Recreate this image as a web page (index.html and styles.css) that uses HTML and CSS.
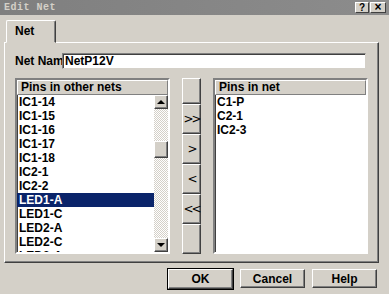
FILE: index.html
```html
<!DOCTYPE html>
<html lang="en">
<head>
    <meta charset="UTF-8">
    <meta name="viewport" content="width=device-width, initial-scale=1.0">
    <title>Edit Net</title>
    <link rel="stylesheet" href="styles.css">
</head>
<body>

    <div class="window">
        <div class="titlebar">
            <span class="title">Edit Net</span>
            <div class="caption-btns">
                <span class="cap-btn">?</span>
                <span class="cap-btn close">×</span>
            </div>
        </div>

        <div class="dialog">
            <div class="tabs">
                <div class="tab">Net</div>
            </div>

            <div class="panel">
                <div class="name-row">
                    <label class="name-label" for="net-name">Net Name</label>
                    <input type="text" id="net-name" class="field" value="NetP12V">
                </div>

                <div class="lists">
                    <div class="listbox">
                        <div class="list-head">Pins in other nets</div>
                        <div class="list-body">
                            <ul class="items">
                                <li>IC1-14</li>
                                <li>IC1-15</li>
                                <li>IC1-16</li>
                                <li>IC1-17</li>
                                <li>IC1-18</li>
                                <li>IC2-1</li>
                                <li>IC2-2</li>
                                <li class="selected">LED1-A</li>
                                <li>LED1-C</li>
                                <li>LED2-A</li>
                                <li>LED2-C</li>
                                <li>LED3-A</li>
                            </ul>
                            <div class="scrollbar">
                                <div class="sb-btn"><span class="arrow up"></span></div>
                                <div class="sb-gap"></div>
                                <div class="sb-thumb"></div>
                                <div class="sb-rest"></div>
                                <div class="sb-btn"><span class="arrow down"></span></div>
                            </div>
                        </div>
                    </div>

                    <div class="movers">
                        <button class="mover first"></button>
                        <button class="mover">&gt;&gt;</button>
                        <button class="mover">&gt;</button>
                        <button class="mover">&lt;</button>
                        <button class="mover">&lt;&lt;</button>
                        <button class="mover"></button>
                    </div>

                    <div class="listbox">
                        <div class="list-head">Pins in net</div>
                        <div class="list-body">
                            <ul class="items">
                                <li>C1-P</li>
                                <li>C2-1</li>
                                <li>IC2-3</li>
                            </ul>
                        </div>
                    </div>
                </div>
            </div>

            <div class="actions">
                <button class="btn default">OK</button>
                <button class="btn">Cancel</button>
                <button class="btn">Help</button>
            </div>
        </div>
    </div>

</body>
</html>
```

FILE: styles.css
```css
body {
    margin: 0;
    font-family: "Liberation Sans", Arial, sans-serif;
    font-size: 12px;
    font-weight: bold;
    color: #000;
    background-color: #d4d0c8;
}
.window {
    width: 389px;
    height: 294px;
    background-color: #d4d0c8;
    overflow: hidden;
}
.titlebar {
    height: 15px;
    display: flex;
    align-items: center;
    justify-content: space-between;
    padding: 0 3px 0 4px;
    background: linear-gradient(to right, #7f7f7f, #8c8c8c);
}
.title {
    font-family: "Liberation Mono", monospace;
    font-size: 10px;
    font-weight: bold;
    color: #d4d0c8;
    letter-spacing: 0.5px;
}
.caption-btns {
    display: flex;
    gap: 1px;
}
.cap-btn {
    width: 12px;
    height: 9px;
    display: flex;
    align-items: center;
    justify-content: center;
    font-size: 10px;
    line-height: 9px;
    background-color: #d4d0c8;
    border: 1px solid;
    border-color: #fff #404040 #404040 #fff;
}
.close {
    width: 14px;
    font-size: 12px;
}
.dialog {
    padding: 5px 10px 0 4px;
}
.tabs {
    display: flex;
    padding-left: 2px;
    position: relative;
    z-index: 1;
    margin-bottom: -1px;
}
.tab {
    width: 40px;
    height: 21px;
    padding-left: 8px;
    line-height: 21px;
    background-color: #d4d0c8;
    border: 1px solid;
    border-color: #fff #404040 #d4d0c8 #fff;
    border-radius: 2px 2px 0 0;
    box-shadow: inset -1px 0 #808080;
}
.panel {
    height: 209px;
    padding: 10px 10px 0 10px;
    border: 1px solid;
    border-color: #fff #404040 #404040 #fff;
    box-shadow: inset -1px -1px #808080;
}
.name-row {
    display: flex;
    height: 16px;
    align-items: center;
}
.name-label {
    width: 47px;
    white-space: nowrap;
    overflow: hidden;
}
.field {
    width: 298px;
    height: 12px;
    margin: 0;
    padding: 1px 2px;
    font: inherit;
    background-color: #fff;
    border: 1px solid;
    border-color: #808080 #d4d0c8 #d4d0c8 #808080;
    box-shadow: inset 1px 1px #404040;
    outline: none;
}
.lists {
    display: flex;
    gap: 12px;
    margin-top: 9px;
    height: 176px;
}
.listbox {
    width: 151px;
    display: flex;
    flex-direction: column;
    background-color: #fff;
    border: 2px solid;
    border-color: #808080 #fff #fff #808080;
    box-shadow: inset 1px 1px #404040;
}
.list-head {
    height: 13px;
    line-height: 13px;
    padding-left: 3px;
    background-color: #d4d0c8;
    border: 1px solid;
    border-color: #fff #808080 #808080 #fff;
    white-space: nowrap;
    overflow: hidden;
}
.list-body {
    flex: 1;
    display: flex;
    overflow: hidden;
}
.items {
    flex: 1;
    list-style-type: none;
    margin: 0;
    padding: 0;
}
.items li {
    height: 14px;
    line-height: 14px;
    padding-left: 2px;
    white-space: nowrap;
}
.items .selected {
    background-color: #0a246a;
    color: #fff;
}
.scrollbar {
    width: 14px;
    display: flex;
    flex-direction: column;
    background: repeating-conic-gradient(#d4d0c8 0 25%, #fff 0 50%) 0 0 / 2px 2px;
}
.sb-btn,
.sb-thumb {
    box-sizing: border-box;
    background-color: #d4d0c8;
    border: 1px solid;
    border-color: #fff #404040 #404040 #fff;
    box-shadow: inset -1px -1px #808080;
}
.sb-btn {
    height: 14px;
    display: flex;
    align-items: center;
    justify-content: center;
}
.sb-gap {
    height: 32px;
}
.sb-thumb {
    height: 17px;
}
.sb-rest {
    flex: 1;
}
.arrow {
    width: 0;
    height: 0;
    border-left: 4px solid transparent;
    border-right: 4px solid transparent;
}
.arrow.up {
    border-bottom: 4px solid #000;
}
.arrow.down {
    border-top: 4px solid #000;
}
.movers {
    width: 19px;
    display: flex;
    flex-direction: column;
}
.mover {
    height: 30px;
    padding: 0;
    font-family: "DejaVu Sans", sans-serif;
    font-size: 12px;
    font-weight: normal;
    letter-spacing: -2px;
    color: #000;
    background-color: #d4d0c8;
    border: 1px solid;
    border-color: #fff #404040 #404040 #fff;
    box-shadow: inset -1px -1px #808080;
}
.mover.first {
    height: 26px;
}
.actions {
    display: flex;
    justify-content: flex-end;
    gap: 7px;
    margin: 6px 2px 0 0;
}
.btn {
    width: 65px;
    height: 19px;
    padding: 0;
    font: inherit;
    color: #000;
    background-color: #d4d0c8;
    border: 1px solid;
    border-color: #fff #404040 #404040 #fff;
    box-shadow: inset -1px -1px #808080;
}
.btn.default {
    height: 20px;
    outline: 1px solid #000;
    outline-offset: 0;
}
```
